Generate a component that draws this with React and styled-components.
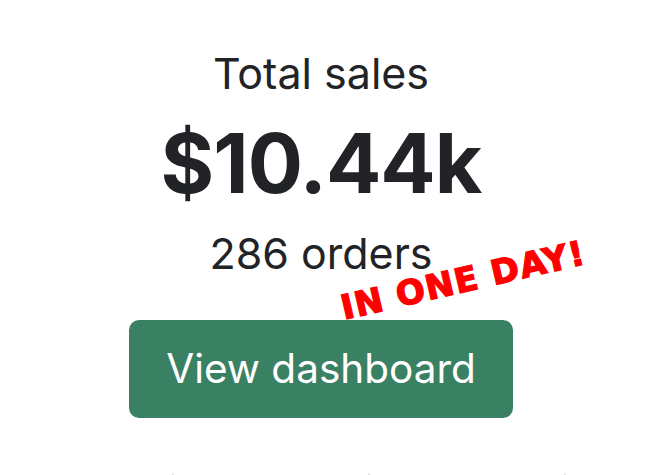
import styled, { createGlobalStyle } from "styled-components";

const GlobalStyle = createGlobalStyle`
  body {
    margin: 0;
    background: #ffffff;
    font-family: Inter, "Noto Sans", sans-serif;
    color: #222326;
  }
`;

const Card = styled.div`
  position: relative;
  width: 642px;
  height: 475px;
  overflow: hidden;
  display: flex;
  flex-direction: column;
  align-items: center;
  padding-top: 48px;
  box-sizing: border-box;
`;

const Label = styled.div`
  font-size: 43px;
  line-height: 1.2;
  font-weight: 400;
  margin-top: ${(p) => p.gap || 0}px;
`;

const Amount = styled.div`
  font-size: 82px;
  line-height: 1.2;
  font-weight: 700;
  letter-spacing: -1px;
  margin-top: 15px;
`;

const Button = styled.button`
  margin-top: 40px;
  width: 384px;
  height: 98px;
  border: none;
  border-radius: 10px;
  background: #3a8063;
  color: #ffffff;
  font-family: Inter, "Noto Sans", sans-serif;
  font-size: 40.5px;
  font-weight: 400;
  cursor: pointer;
`;

const Stamp = styled.div`
  position: absolute;
  left: 463px;
  top: 280px;
  transform: translate(-50%, -50%) rotate(-13deg);
  color: #ff0000;
  -webkit-text-stroke: 1.3px #ff0000;
  font-family: "DejaVu Sans", sans-serif;
  font-weight: 700;
  font-size: 34px;
  letter-spacing: 1.2px;
  white-space: nowrap;
  line-height: 1;
`;

const Ticks = styled.div`
  align-self: flex-start;
  display: flex;
  gap: 194px;
  padding-left: 172px;
  margin-top: 55px;
`;

const Tick = styled.span`
  width: 2px;
  height: 2px;
  background: #e6e6e6;
`;

export default function App() {
  return (
    <>
      <GlobalStyle />
      <Card>
        <Label>Total sales</Label>
        <Amount>$10.44k</Amount>
        <Label gap={15}>286 orders</Label>
        <Button>View dashboard</Button>
        <Ticks>
          <Tick />
          <Tick />
          <Tick />
        </Ticks>
        <Stamp>IN ONE DAY!</Stamp>
      </Card>
    </>
  );
}
